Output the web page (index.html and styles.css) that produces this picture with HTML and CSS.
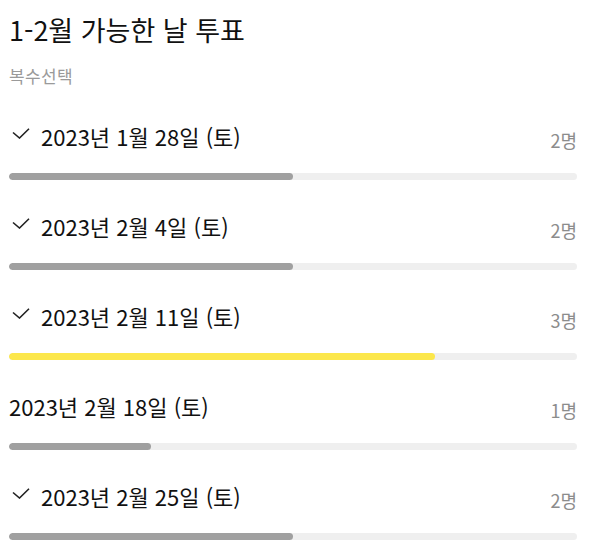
FILE: index.html
```html
<!DOCTYPE html>
<html lang="ko">
<head>
<meta charset="utf-8">
<link rel="stylesheet" href="styles.css">
</head>
<body>
<div class="poll">
  <h1 class="title">1-2월 가능한 날 투표</h1>
  <div class="subtitle">복수선택</div>
  <ul class="options">
    <li class="option">
      <div class="head">
        <span class="check"><svg width="18" height="11" viewBox="0 0 18 11"><path d="M1 4.5 L7.5 10 L17 0.8" fill="none" stroke="#222" stroke-width="1.6"/></svg></span>
        <span class="label">2023년 1월 28일 (토)</span>
        <span class="count">2명</span>
      </div>
      <div class="track"><div class="fill" style="width:50%"></div></div>
    </li>
    <li class="option">
      <div class="head">
        <span class="check"><svg width="18" height="11" viewBox="0 0 18 11"><path d="M1 4.5 L7.5 10 L17 0.8" fill="none" stroke="#222" stroke-width="1.6"/></svg></span>
        <span class="label">2023년 2월 4일 (토)</span>
        <span class="count">2명</span>
      </div>
      <div class="track"><div class="fill" style="width:50%"></div></div>
    </li>
    <li class="option">
      <div class="head">
        <span class="check"><svg width="18" height="11" viewBox="0 0 18 11"><path d="M1 4.5 L7.5 10 L17 0.8" fill="none" stroke="#222" stroke-width="1.6"/></svg></span>
        <span class="label">2023년 2월 11일 (토)</span>
        <span class="count">3명</span>
      </div>
      <div class="track"><div class="fill top" style="width:75%"></div></div>
    </li>
    <li class="option">
      <div class="head">
        <span class="label">2023년 2월 18일 (토)</span>
        <span class="count">1명</span>
      </div>
      <div class="track"><div class="fill" style="width:25%"></div></div>
    </li>
    <li class="option">
      <div class="head">
        <span class="check"><svg width="18" height="11" viewBox="0 0 18 11"><path d="M1 4.5 L7.5 10 L17 0.8" fill="none" stroke="#222" stroke-width="1.6"/></svg></span>
        <span class="label">2023년 2월 25일 (토)</span>
        <span class="count">2명</span>
      </div>
      <div class="track"><div class="fill" style="width:50%"></div></div>
    </li>
  </ul>
</div>
</body>
</html>
```
FILE: styles.css
```css
* { box-sizing: border-box; }
html, body { margin: 0; padding: 0; background: #fff; }
body { font-family: "Noto Sans CJK KR", "Noto Sans", sans-serif; color: #111; }
.poll { padding: 11px 13px 0 9px; }
.title { margin: 0; font-size: 27px; line-height: 38px; font-weight: 400; }
.subtitle { margin-top: 15px; font-size: 17px; line-height: 24px; color: #9a9a9a; letter-spacing: 0.4px; }
.options { list-style: none; margin: 33px 0 0; padding: 0; }
.option { padding-bottom: 31px; }
.head { display: flex; align-items: center; height: 30px; }
.check { display: flex; width: 32px; padding-left: 3px; margin-top: -6px; }
.label { font-size: 22px; line-height: 30px; }
.count { margin-left: auto; font-size: 18px; line-height: 30px; color: #8c8c8c; margin-top: 8px; }
.track { margin-top: 22px; height: 7px; border-radius: 4px; background: #efefef; overflow: hidden; }
.fill { height: 100%; border-radius: 4px; background: #a0a0a0; }
.fill.top { background: #fce74b; }
```
